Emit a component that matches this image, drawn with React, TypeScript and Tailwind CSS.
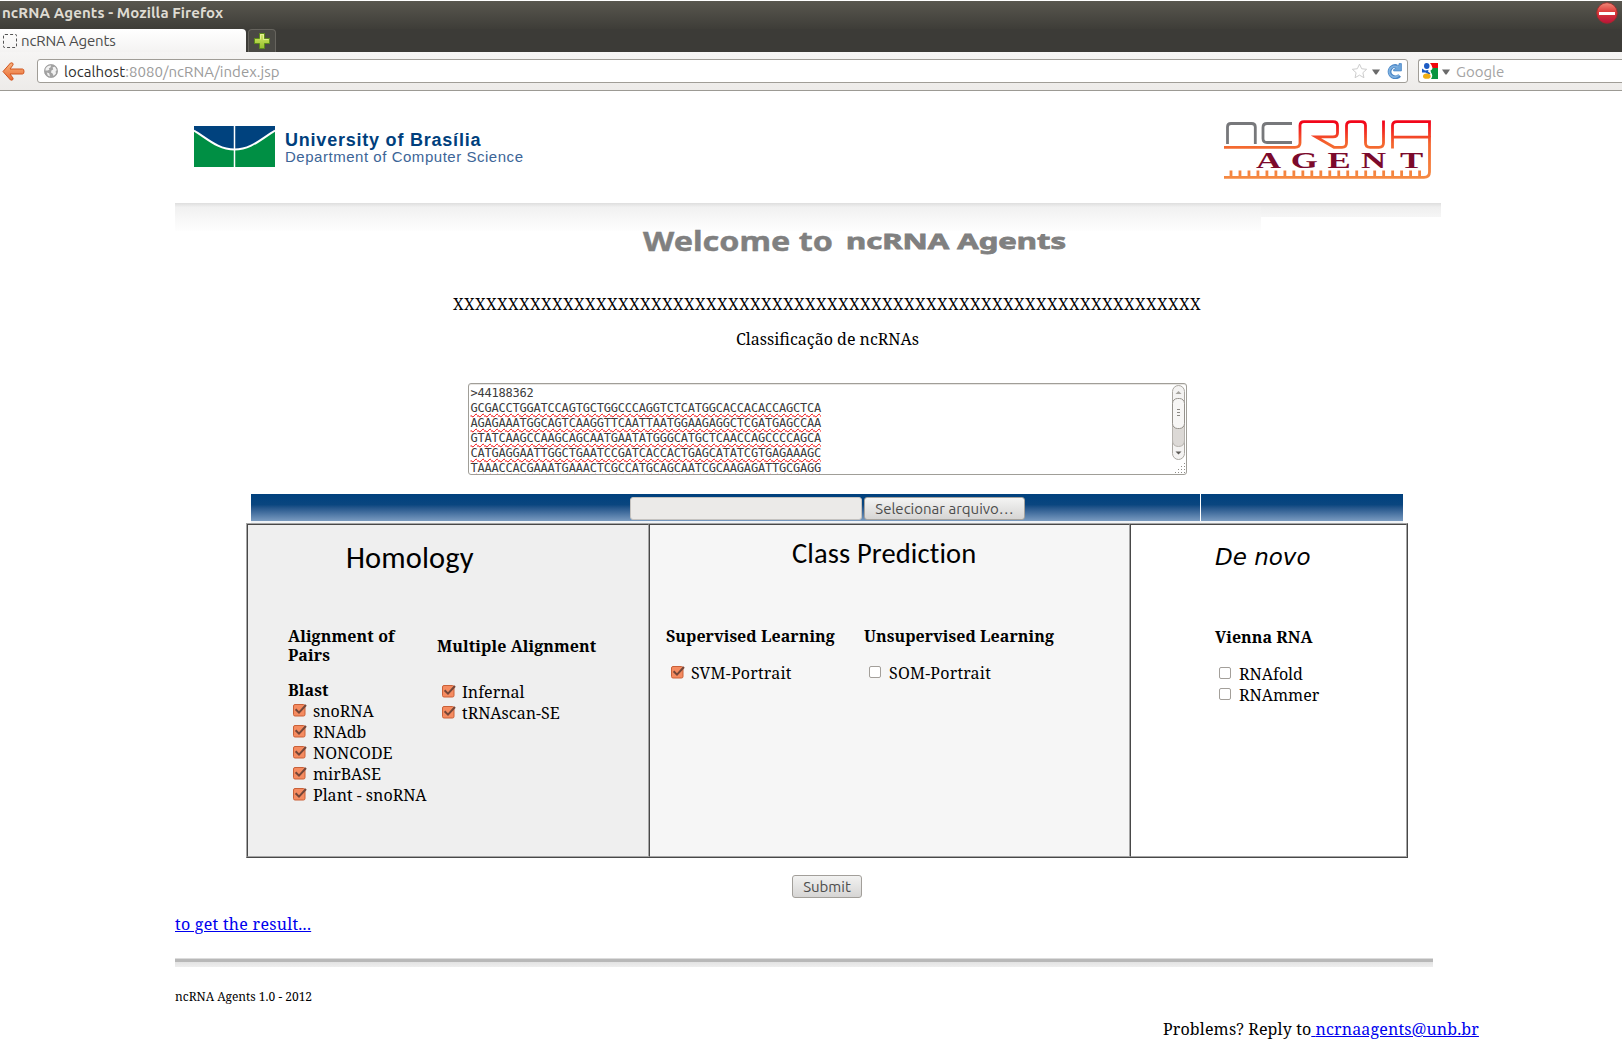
import React from "react";

const SEQUENCE = [
  "GCGACCTGGATCCAGTGCTGGCCCAGGTCTCATGGCACCACACCAGCTCA",
  "AGAGAAATGGCAGTCAAGGTTCAATTAATGGAAGAGGCTCGATGAGCCAA",
  "GTATCAAGCCAAGCAGCAATGAATATGGGCATGCTCAACCAGCCCCAGCA",
  "CATGAGGAATTGGCTGAATCCGATCACCACTGAGCATATCGTGAGAAAGC",
  "TAAACCACGAAATGAAACTCGCCATGCAGCAATCGCAAGAGATTGCGAGG",
];

function CloseIcon() {
  return (
    <svg width="22" height="22" viewBox="0 0 22 22" className="mt-px">
      <defs>
        <linearGradient id="close" x1="0" y1="0" x2="0" y2="1">
          <stop offset="0" stopColor="#f08a78" />
          <stop offset="0.45" stopColor="#dd3b3b" />
          <stop offset="1" stopColor="#b8123a" />
        </linearGradient>
      </defs>
      <circle cx="11" cy="11" r="10.3" fill="url(#close)" stroke="#a32a2a" strokeWidth="0.8" />
      <rect x="3" y="10" width="16" height="3" fill="#fff" />
    </svg>
  );
}

function PlusIcon() {
  return (
    <svg width="16" height="16" viewBox="0 0 16 16">
      <defs>
        <linearGradient id="plus" x1="0" y1="0" x2="0" y2="1">
          <stop offset="0" stopColor="#d8ea6a" />
          <stop offset="1" stopColor="#94bf2c" />
        </linearGradient>
      </defs>
      <path d="M5.5 0.5h5v5h5v5h-5v5h-5v-5h-5v-5h5z" fill="url(#plus)" stroke="#5d8a1c" />
      <path d="M6.5 6.5v-5h3v5h5" fill="none" stroke="#eef7a8" strokeOpacity="0.7" />
    </svg>
  );
}

function BackIcon() {
  return (
    <svg width="23" height="19" viewBox="0 0 23 19">
      <defs>
        <linearGradient id="back" x1="0" y1="0" x2="0" y2="1">
          <stop offset="0" stopColor="#f7b27c" />
          <stop offset="1" stopColor="#ea6a33" />
        </linearGradient>
      </defs>
      <path
        d="M8.5 1C10.5 .4 11.8 1.6 10.8 3.2L8 7H20.5Q22 7 22 9.5T20.5 12H8L10.8 15.8C11.8 17.4 10.5 18.6 8.5 18L1 9.5Z"
        fill="url(#back)"
        stroke="#d0541f"
        strokeLinejoin="round"
      />
    </svg>
  );
}

function GlobeIcon() {
  return (
    <svg width="14" height="14" viewBox="0 0 14 14">
      <circle cx="7" cy="7" r="6.6" fill="#a3a3a3" stroke="#8f8f8f" strokeWidth="0.6" />
      <path d="M1.6 4.6C3 2 5.3 1.2 7 1.6L6.6 3.2 4.8 4.4 5.4 5.8 3.6 6.6 1.4 6.4ZM8.6 3.2L11 2.8 12.8 6 11.6 7.6 12 9.6 9.6 12 8.6 9.4 7 8.6 7.4 6.4 9.2 5.6ZM2.8 8.6L5.2 9.2 6 12.4 3.8 11.4Z" fill="#f1f1f1" />
    </svg>
  );
}

function StarIcon() {
  return (
    <svg width="17" height="16" viewBox="0 0 18 17">
      <path d="M9 1.2l2.3 4.9 5.3.6-4 3.6 1.1 5.3L9 12.9l-4.700 2.700 1.100-5.300-4-3.600 5.300-.600z" fill="#fff" stroke="#c9c9c9" />
    </svg>
  );
}

function ReloadIcon() {
  return (
    <svg width="16" height="16" viewBox="0 0 16 16">
      <path d="M13.6 12.4A5.700 5.700 0 1 1 11 3.200" fill="none" stroke="#4a86c6" strokeWidth="3.800" />
      <path d="M7.600 7.900V6.600L10 5.200 10.600 3 13 2.200V.6H15.400V7.900Z" fill="#6fa6da" stroke="#4a86c6" strokeWidth="0.800" />
      <path d="M12.900 12A5.400 5.400 0 1 1 11.600 4.200" fill="none" stroke="#7fb1e0" strokeWidth="1.800" />
    </svg>
  );
}

function GoogleIcon() {
  return (
    <svg width="16" height="16" viewBox="0 0 16 16">
      <path d="M8 0H16V5H10.500Q10 2 8 0z" fill="#f0060c" />
      <path d="M10.500 5H16V16H9Q11.500 12.500 9 9.500L8.500 7.500Q10.500 6.500 10.500 5z" fill="#0a9540" />
      <path d="M4.500 0Q7.500 0 7.500 3T4.800 6Q2 6 2 3T4.500 0z" fill="#1c5bc4" />
      <path d="M0 5.500L3 7.500 6.500 7 6 8.500 8.500 10.500 7 11.500 3.500 9.500 0 9.500z" fill="#1c5bc4" />
      <ellipse cx="4.800" cy="13.200" rx="3.800" ry="2.600" fill="#f0ae14" />
    </svg>
  );
}

function Caret() {
  return (
    <svg width="8" height="6" viewBox="0 0 8 6">
      <path d="M0 .5h8L4.600 5.500H3.400z" fill="#6b6b6b" />
    </svg>
  );
}

function UnbLogo() {
  return (
    <svg width="81" height="41" viewBox="0 0 81 41">
      <rect width="81" height="41" fill="#00427e" />
      <path d="M0 5C14 14 24 23.500 40.500 23.500S67 14 81 5V41H0z" fill="#008f44" />
      <path d="M0 4.500C14 13 24 23.500 40.500 23.500S67 13 81 4.500" fill="none" stroke="#fff" strokeWidth="2" />
      <path d="M40.500 0V41" stroke="#fff" strokeWidth="1.500" />
    </svg>
  );
}

function AgentLogo() {
  const ticks = Array.from({ length: 22 }, (_, i) => 7 + i * 8.98);
  return (
    <svg width="208" height="62" viewBox="0 0 208 62">
      <defs>
        <linearGradient id="rna" gradientUnits="userSpaceOnUse" x1="0" y1="1" x2="0" y2="60">
          <stop offset="0.050" stopColor="#f2061a" />
          <stop offset="0.400" stopColor="#f4662e" />
          <stop offset="1" stopColor="#f58a42" />
        </linearGradient>
      </defs>
      <g fill="none" strokeWidth="2.800">
        <g stroke="#77787b">
          <path d="M3.500 25V8Q3.500 4.500 7 4.500H27.500Q31.300 4.500 31.300 8V25" />
          <path d="M68 4.500H43Q39 4.500 39 8.500V19.500Q39 23.500 43 23.500H68" />
        </g>
        <g stroke="url(#rna)">
          <path d="M0 28.300H71Q76 28.300 76 24V6.500Q76 2.600 80 2.600H109Q113.500 2.600 113.500 6.500V14Q113.500 17.900 109 17.900H92L110 28.300H118Q122.500 28.300 122.500 24V6.500Q122.500 2.600 127 2.600H137Q141.500 2.600 141.500 6.500V24Q141.500 28.300 146 28.300H155Q159.500 28.300 159.500 24V1.500" />
          <path d="M168.500 29.500V6.500Q168.500 2.600 173 2.600H205.500V53Q205.500 58.400 200 58.400H0" />
          <path d="M168.500 18.050H205.500V18.200" />
          {ticks.map((x) => (
            <path key={x} d={`M${x} 51.500L${x + 0.01} 58`} />
          ))}
        </g>
      </g>
      <text
        transform="translate(0 49) scale(1.450 1)"
        x="22 46 71.400 94.500 121.400"
        fill="#7c0a2c"
        className="font-['Liberation_Serif',serif] text-[24px] font-bold"
      >
        AGENT
      </text>
    </svg>
  );
}

function Checkbox({ checked }: { checked: boolean }) {
  return checked ? (
    <svg width="15" height="13" viewBox="0 0 15 13" className="mt-[3px] mr-[5px] shrink-0">
      <rect x="0.500" y="0.500" width="11.500" height="11.500" rx="1.500" fill="#f58b60" stroke="#c96038" />
      <path d="M2.600 5.200L6 8.600 13 1" fill="none" stroke="#744638" strokeWidth="2" />
    </svg>
  ) : (
    <span className="mt-[3px] mr-2 h-3 w-3 shrink-0 rounded-[2px] border border-[#a39f9a] bg-white" />
  );
}

function Option({ label, checked = true }: { label: string; checked?: boolean }) {
  return (
    <label className="flex h-[21px] items-start pl-[5px] leading-[21px] whitespace-nowrap">
      <Checkbox checked={checked} />
      {label}
    </label>
  );
}

function Browser() {
  return (
    <header className="font-[Ubuntu,'Noto_Sans',sans-serif] text-[15px]">
      <div className="mt-px flex h-7 items-start justify-between bg-linear-to-b from-[#59574f] to-[#3e3d38] pr-1 pl-[2px]">
        <h1 className="leading-6 font-bold tracking-[0.090px] text-[#dfdbd2]">ncRNA Agents - Mozilla Firefox</h1>
        <CloseIcon />
      </div>
      <div className="flex h-[23px] bg-[#3c3b37]">
        <div className="flex w-[246px] items-center rounded-tr-[4px] bg-linear-to-b from-white to-[#f4f3f2] pl-[3px] text-[#4c4c4c]">
          <span className="h-[14px] w-[14px] rounded-[2px] border border-dashed border-[#555]" />
          <span className="ml-[4px] leading-[22px] tracking-[-0.150px]">ncRNA Agents</span>
        </div>
        <div className="ml-[2px] flex w-7 items-center justify-center rounded-t-[4px] border border-b-0 border-[#66645e] bg-[#4a4944]">
          <PlusIcon />
        </div>
      </div>
      <div className="flex h-[39px] items-center border-b border-[#9c9a94] bg-linear-to-b from-[#f6f5f4] to-[#edebe9]">
        <div className="w-[37px] pl-[2px]">
          <BackIcon />
        </div>
        <div className="flex h-6 w-[1371px] items-center rounded-[3px] border border-[#a09d97] bg-white pr-[5px] pl-[6px]">
          <GlobeIcon />
          <p className="ml-[6px] flex-1 pt-px leading-[22px] tracking-[0.030px] text-[#9b9b9b]">
            <span className="text-[#2f2f2f]">localhost</span>:8080/ncRNA/index.jsp
          </p>
          <StarIcon />
          <span className="mr-[6px] ml-[4px] mt-0.5">
            <Caret />
          </span>
          <ReloadIcon />
        </div>
        <div className="ml-[10px] flex h-6 flex-1 items-center rounded-l-[3px] border border-r-0 border-[#a09d97] bg-white pl-[3px]">
          <GoogleIcon />
          <span className="mt-0.5 ml-1">
            <Caret />
          </span>
          <span className="ml-[6px] pt-px leading-[22px] text-[#a3a3a3]">Google</span>
        </div>
      </div>
    </header>
  );
}

function Banner() {
  return (
    <>
      <div className="flex h-[112px] items-start justify-between pr-[9px] pl-[19px]">
        <div className="flex pt-[35px] font-['Liberation_Sans',sans-serif] text-[#003f7d]">
          <UnbLogo />
          <div className="ml-[10px] pt-[4px] whitespace-nowrap">
            <p className="text-[18px] leading-[20px] font-bold tracking-[0.780px]">University of Brasília</p>
            <p className="text-[15px] leading-[14px] tracking-[0.530px] text-[#3c6597]">Department of Computer Science</p>
          </div>
        </div>
        <div className="pt-7">
          <AgentLogo />
        </div>
      </div>
      <div className="flex h-7 items-start">
        <div className="h-7 w-[1086px] bg-linear-to-b from-[#dedede] via-[#f1f1f1] via-15% to-[#fefefe]" />
        <div className="h-[14px] flex-1 bg-linear-to-b from-[#dedede] via-[#efefef] via-30% to-[#f6f6f6]" />
      </div>
      <svg width="440" height="54" viewBox="0 -15 440 54" className="-mt-[15px] -mb-[5px] ml-[466px] text-[#808080]">
        <text x="2" y="20" textLength="190" lengthAdjust="spacingAndGlyphs" fill="currentColor" stroke="currentColor" strokeWidth="0.400" className="font-['Noto_Sans',sans-serif] text-[26px] font-bold">
          Welcome to
        </text>
        <text x="205" y="18" textLength="220" lengthAdjust="spacingAndGlyphs" fill="currentColor" stroke="currentColor" strokeWidth="0.800" className="font-['Noto_Sans',sans-serif] text-[22px] font-bold">
          ncRNA Agents
        </text>
      </svg>
    </>
  );
}

function SequenceBox() {
  return (
    <div className="relative mt-8 h-[92px] w-[719px] overflow-hidden rounded-[3px] border border-[#a09e98] bg-white pl-[2px] text-left font-['DejaVu_Sans_Mono',monospace] text-[12px] leading-[15px] tracking-[-0.215px] text-[#3c3c3c] shadow-[inset_0_1px_0_#e8e6e3]">
      <p className="pt-[2px]">&gt;44188362</p>
      {SEQUENCE.map((line) => (
        <p key={line}>
          <span className="underline decoration-[#f00000] decoration-wavy decoration-[1.200px] underline-offset-[1px] [text-decoration-skip-ink:none]">{line}</span>
        </p>
      ))}
      <svg width="14" height="89" viewBox="0 0 14 89" className="absolute top-px right-0">
        <rect x="0.500" y="0.500" width="12" height="74" rx="6" fill="#f4f3f2" stroke="#aaa7a1" />
        <path d="M.5 40V55Q.5 61.500 6.500 61.500T12.500 55V40" fill="#dcd9d6" stroke="#b5b2ad" />
        <rect x="0.500" y="13.500" width="12" height="30" rx="5" fill="#f7f6f5" stroke="#96938d" />
        <path d="M5 24.500h3M5 27.500h3M5 30.500h3" stroke="#8b8883" />
        <path d="M3.500 9L6.500 6 9.500 9z" fill="#a5a39e" />
        <path d="M3.500 66.500L6.500 69.500 9.500 66.500z" fill="#5c5a56" />
        <path d="M12.500 78v10M9.500 81v7M6.500 84v4M3.500 87v1" stroke="#8f8d88" strokeDasharray="1 2" />
      </svg>
    </div>
  );
}

function FileBar() {
  return (
    <div className="mt-[19px] h-[29px] w-[1152px] bg-[#eef2f6]">
      <div className="flex h-[27px] bg-linear-to-b from-[#00407d] from-0% via-[#0a467f] via-40% to-[#7a9bc0] to-100% font-[Ubuntu,'Noto_Sans',sans-serif] text-[15px]">
        <div className="flex flex-1 items-start justify-start border-r border-white pt-[3px] pl-[379px]">
          <div className="h-[23px] w-[232px] rounded-[3px] border border-[#c4c2bf] bg-[#ebeae8]" />
          <button className="ml-[2px] h-[23px] w-[161px] rounded-[3px] border border-[#a6a39e] bg-linear-to-b from-[#f4f4f3] to-[#d6d5d4] text-center leading-[22px] text-[#4c4c4c]">
            Selecionar arquivo…
          </button>
        </div>
        <div className="w-[202px]" />
      </div>
    </div>
  );
}

const cell = "border border-t-[#484848] border-l-[#484848] border-r-[#a6a6a6] border-b-[#a6a6a6]";
const title = "whitespace-nowrap text-black";
const heading = "font-bold leading-[19px] tracking-[0.040px]";

function Methods() {
  return (
    <div className="flex h-[335px] w-[1162px] border border-t-[#a6a6a6] border-l-[#a6a6a6] border-r-[#484848] border-b-[#484848] text-left">
      <section className={`${cell} w-[402px] bg-[#efefef] pl-10`}>
        <h2 className={`${title} mt-[15px] ml-[58px] font-[Carlito,'Noto_Sans',sans-serif] text-[30.500px] leading-9 tracking-[0.100px]`}>Homology</h2>
        <div className="mt-[51px] flex">
          <div className="w-[149px] whitespace-nowrap">
            <h3 className="leading-[19px] font-bold tracking-[0.100px]">
              Alignment of
              <br />
              Pairs
            </h3>
            <h4 className="mt-[15px] leading-[21px] font-bold tracking-[0.100px]">Blast</h4>
            <Option label="snoRNA" />
            <Option label="RNAdb" />
            <Option label="NONCODE" />
            <Option label="mirBASE" />
            <Option label="Plant - snoRNA" />
          </div>
          <div className="pt-[10px]">
            <h3 className="mb-[26px] leading-[19px] font-bold tracking-[0.080px]">Multiple Alignment</h3>
            <Option label="Infernal" />
            <Option label="tRNAscan-SE" />
          </div>
        </div>
      </section>
      <section className={`${cell} w-[481px] bg-[#f6f6f6] pl-4`}>
        <h2 className={`${title} mt-[11px] ml-[126px] font-[Carlito,'Noto_Sans',sans-serif] text-[28.500px] leading-9 tracking-[0.130px] [font-variant-ligatures:none]`}>Class Prediction</h2>
        <div className="mt-[55px] flex">
          <div className="w-[198px]">
            <h3 className={`${heading} mb-[17px]`}>Supervised Learning</h3>
            <div className="tracking-[0.200px]">
              <Option label="SVM-Portrait" />
            </div>
          </div>
          <div>
            <h3 className={`${heading} mb-[17px]`}>Unsupervised Learning</h3>
            <div className="tracking-[0.200px]">
              <Option label="SOM-Portrait" checked={false} />
            </div>
          </div>
        </div>
      </section>
      <section className={`${cell} w-[277px] bg-white pl-[84px]`}>
        <h2 className={`${title} mt-[14px] font-['DejaVu_Sans',sans-serif] text-[23px] leading-9 italic`}>De novo</h2>
        <h3 className={`${heading} mt-[53px] mb-[17px]`}>Vienna RNA</h3>
        <div className="-ml-px">
          <Option label="RNAfold" checked={false} />
          <Option label="RNAmmer" checked={false} />
        </div>
      </section>
    </div>
  );
}

export default function App() {
  return (
    <div className="h-[1044px] w-[1622px] overflow-hidden bg-white font-['Noto_Serif',serif] text-[16px] text-black">
      <Browser />
      <main className="ml-[175px] w-[1266px]">
        <Banner />
        <form className="ml-[71px] flex w-[1162px] flex-col items-center pt-[27px] text-center">
          <p className="leading-6 tracking-[0.440px]">{"X".repeat(68)}</p>
          <p className="mt-[11px] ml-px leading-6">Classificação de ncRNAs</p>
          <SequenceBox />
          <FileBar />
          <Methods />
          <button className="mt-[17px] h-[23px] w-[70px] rounded-[3px] border border-[#a29f9a] bg-linear-to-b from-[#f2f2f1] to-[#d6d5d4] font-[Ubuntu,'Noto_Sans',sans-serif] text-[15px] leading-[22px] text-[#4c4c4c]">
            Submit
          </button>
        </form>
        <a href="#" className="mt-[14px] block w-fit leading-6 tracking-[0.280px] text-[#0000ee] underline">
          to get the result...
        </a>
        <div className="mt-[22px] h-[9px] w-[1258px] border-t border-[#dcdcdc] bg-linear-to-b from-[#b8b8b8] from-35% via-[#e2e2e2] via-36% to-[#eeeeee]" />
        <footer>
          <p className="mt-[21px] text-[12px] leading-[18px]">ncRNA Agents 1.0 - 2012</p>
          <p className="mt-[11px] ml-[988px] w-[330px] leading-6 tracking-[0.140px] whitespace-pre">
            Problems? Reply to
            <a href="#" className="text-[#0000ee] underline">
              {" "}
              ncrnaagents@unb.br
            </a>
          </p>
        </footer>
      </main>
    </div>
  );
}
